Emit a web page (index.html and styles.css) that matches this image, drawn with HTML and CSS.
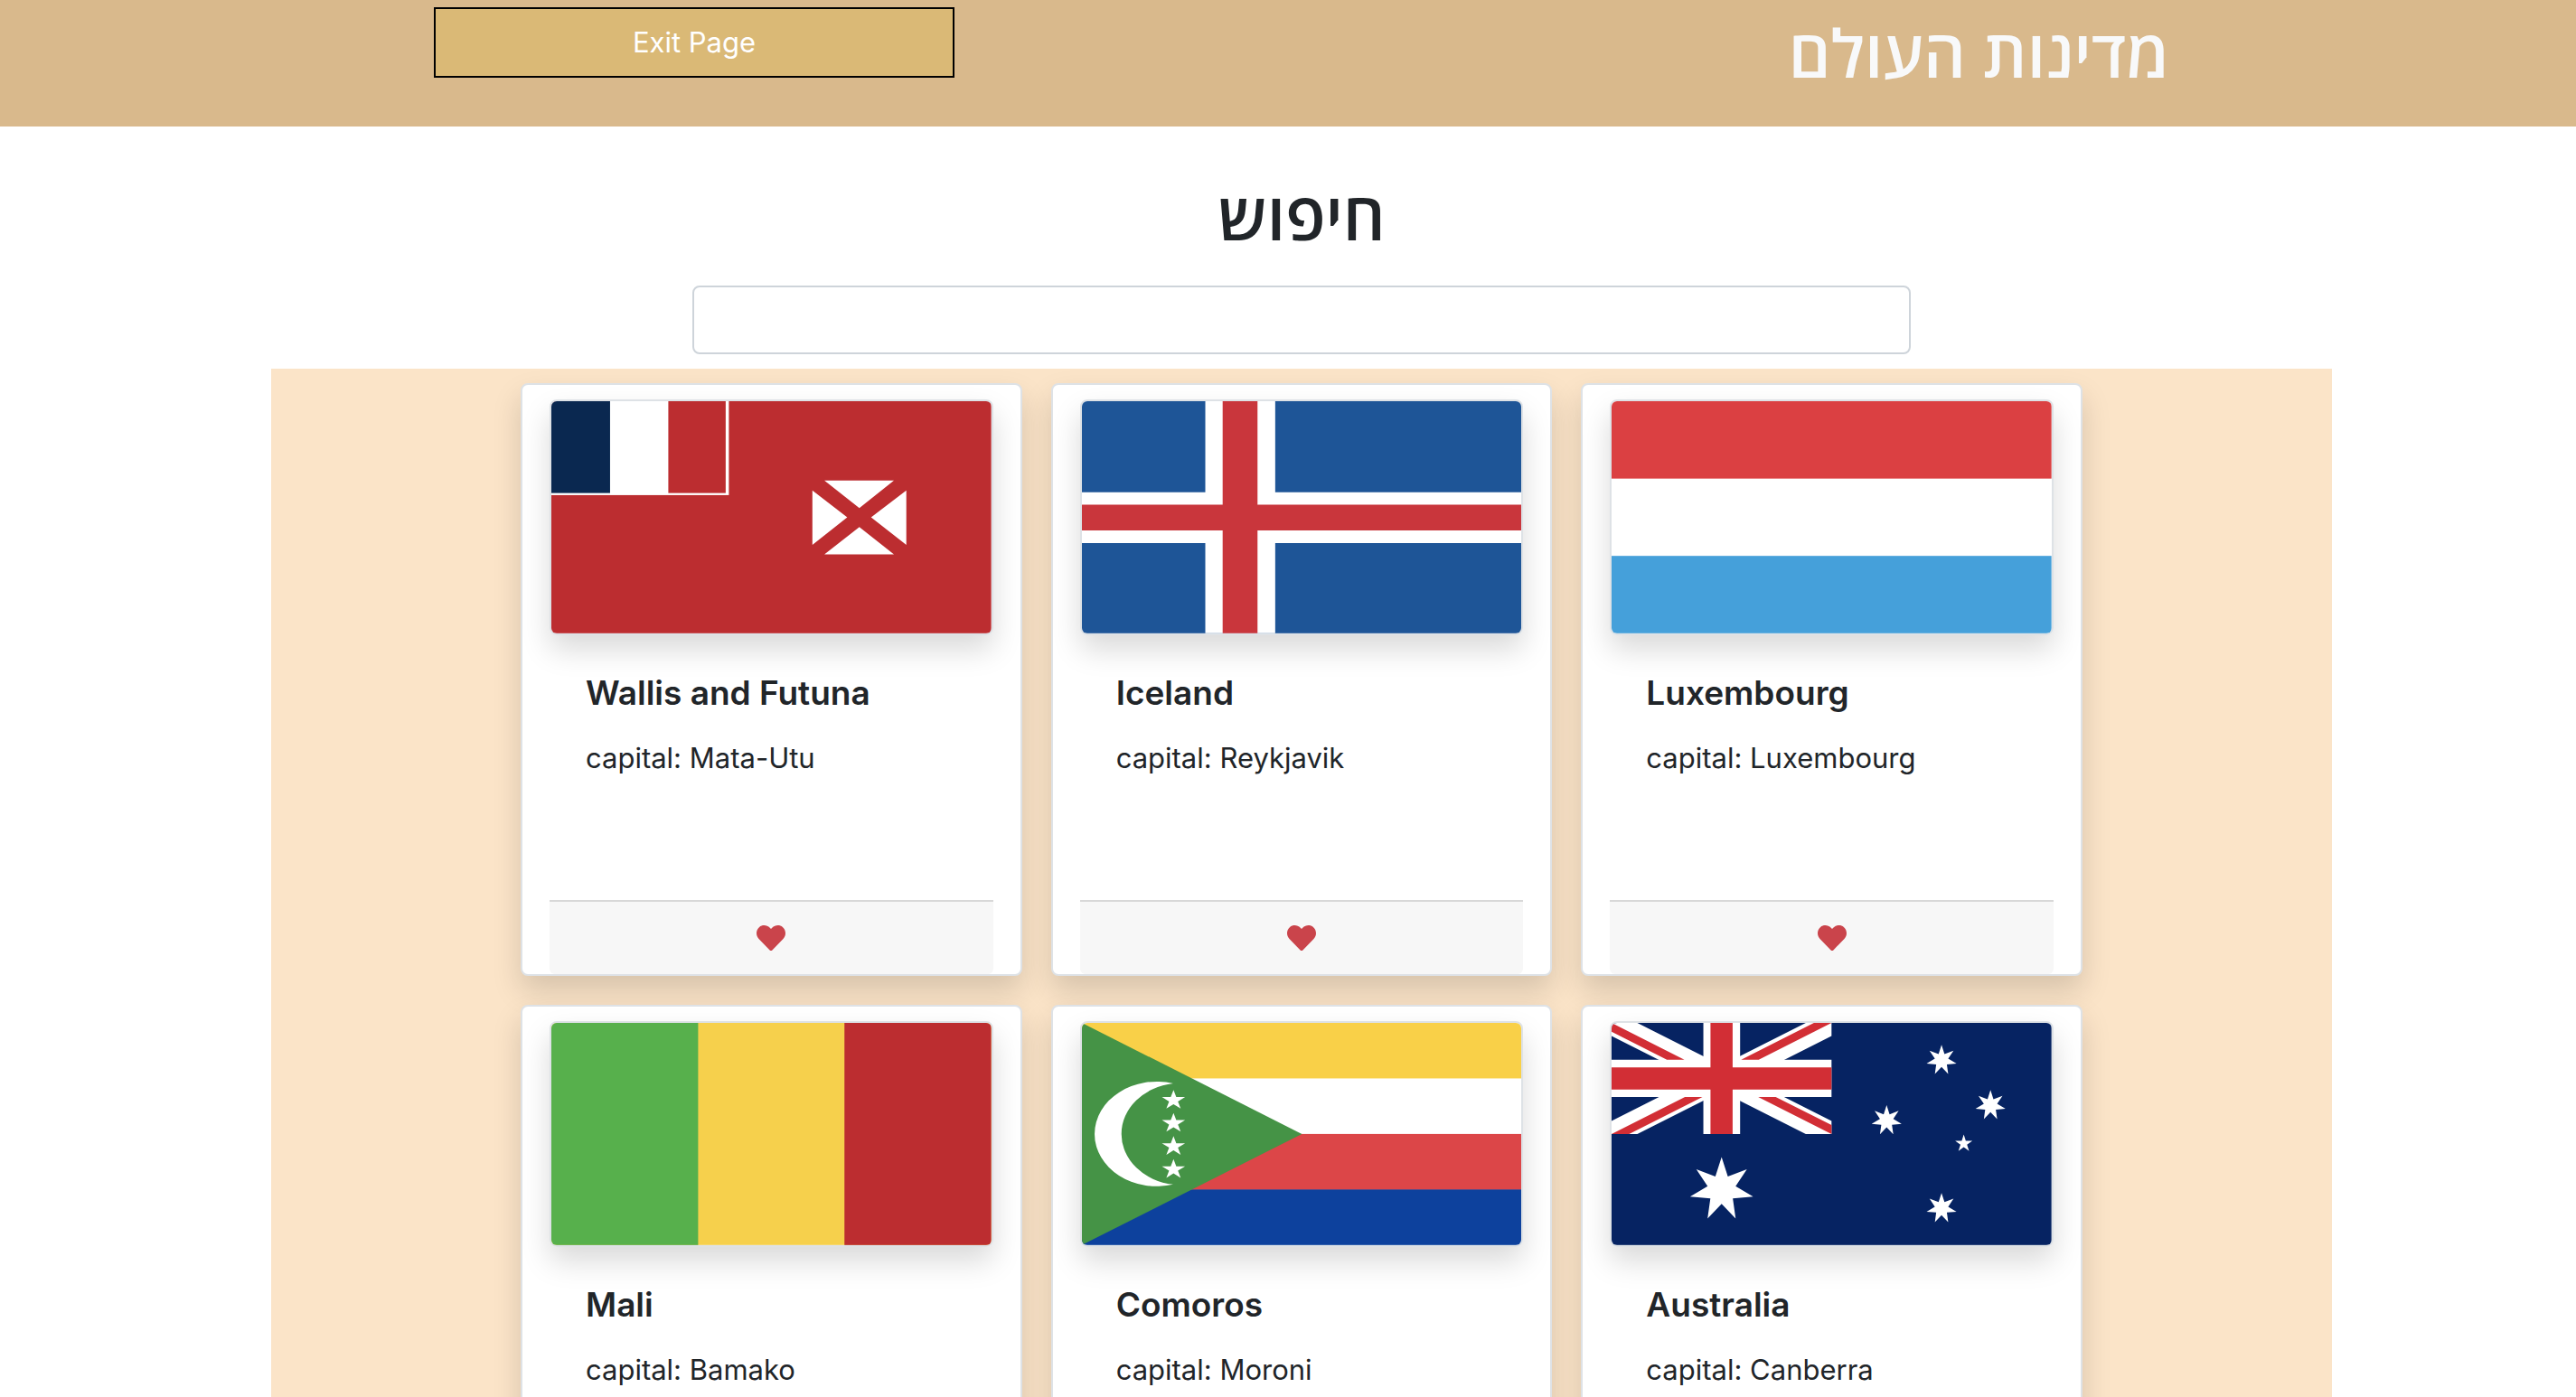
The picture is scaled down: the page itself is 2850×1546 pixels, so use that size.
FILE: index.html
```html
<!DOCTYPE html>
<html lang="en">
<head>
<meta charset="utf-8">
<meta name="viewport" content="width=device-width, initial-scale=1">
<title>מדינות העולם</title>
<link rel="stylesheet" href="styles.css">
</head>
<body>
<svg class="defs" aria-hidden="true">
  <symbol id="heart" viewBox="0 0 512 512"><path d="M462.3 62.6C407.5 15.9 326 24.3 275.7 76.2L256 96.5l-19.7-20.3C186.1 24.3 104.5 15.9 49.7 62.6c-62.8 53.6-66.1 149.8-9.9 207.9l193.5 199.8c12.5 12.9 32.8 12.9 45.3 0l193.5-199.8c56.3-58.1 53-154.3-9.8-207.9z"/></symbol>
  <polygon id="star7" points="0,-1 .193,-.4 .782,-.623 .433,-.099 .975,.223 .347,.277 .434,.901 0,.444 -.434,.901 -.347,.277 -.975,.223 -.433,-.099 -.782,-.623 -.193,-.4"/>
  <polygon id="star5" points="0,-1 .225,-.309 .951,-.309 .363,.118 .588,.809 0,.382 -.588,.809 -.363,.118 -.951,-.309 -.225,-.309"/>
</svg>

<header class="header">
  <div class="header-inner">
    <button class="exit" type="button">Exit Page</button>
    <h1 class="heading header-title" lang="he" dir="rtl">מדינות העולם</h1>
  </div>
</header>

<main class="main">
  <form class="search">
    <label class="heading" for="search" lang="he" dir="rtl">חיפוש</label>
    <input class="search-input" id="search" type="text">
  </form>

  <section class="countries">
    <div class="grid">
      <article class="card">
        <svg class="flag" viewBox="0 0 487 257" role="img" aria-label="Flag of Wallis and Futuna">
          <rect width="487" height="257" fill="#bc2d30"/>
          <rect width="196.500" height="104" fill="#fff"/>
          <rect width="65" height="101.700" fill="#0a2850"/>
          <rect x="129.500" width="63.500" height="101.700" fill="#bc2d30"/>
          <path fill="#fff" d="M302.300 87.700h77L341 118.300zM302.300 169.700h77L341 139.300zM289 98.700V159l38.600-30.300zM393 98.700V159l-39-30.300z"/>
        </svg>
        <div class="card-body">
          <h2 class="card-title">Wallis and Futuna</h2>
          <p class="card-text">capital: Mata-Utu</p>
        </div>
        <div class="card-footer"><button class="like" type="button" aria-label="Like Wallis and Futuna"><svg class="heart"><use href="#heart"/></svg></button></div>
      </article>

      <article class="card">
        <svg class="flag" viewBox="0 0 487 257" role="img" aria-label="Flag of Iceland">
          <rect width="487" height="257" fill="#1e5597"/>
          <path fill="#fff" d="M136.600 0H214v257h-77.400zM0 100.700h487V157H0z"/>
          <path fill="#c9363c" d="M155.800 0h38.600v257h-38.600zM0 114.700h487V143H0z"/>
        </svg>
        <div class="card-body">
          <h2 class="card-title">Iceland</h2>
          <p class="card-text">capital: Reykjavik</p>
        </div>
        <div class="card-footer"><button class="like" type="button" aria-label="Like Iceland"><svg class="heart"><use href="#heart"/></svg></button></div>
      </article>

      <article class="card">
        <svg class="flag" viewBox="0 0 487 257" role="img" aria-label="Flag of Luxembourg">
          <rect width="487" height="257" fill="#fff"/>
          <rect width="487" height="85.700" fill="#db4042"/>
          <rect y="171.300" width="487" height="85.700" fill="#45a0da"/>
        </svg>
        <div class="card-body">
          <h2 class="card-title">Luxembourg</h2>
          <p class="card-text">capital: Luxembourg</p>
        </div>
        <div class="card-footer"><button class="like" type="button" aria-label="Like Luxembourg"><svg class="heart"><use href="#heart"/></svg></button></div>
      </article>

      <article class="card">
        <svg class="flag" viewBox="0 0 487 246" role="img" aria-label="Flag of Mali">
          <rect width="487" height="246" fill="#f6d04c"/>
          <rect width="162.500" height="246" fill="#57b04c"/>
          <rect x="324.500" width="162.500" height="246" fill="#bc2d30"/>
        </svg>
        <div class="card-body">
          <h2 class="card-title">Mali</h2>
          <p class="card-text">capital: Bamako</p>
        </div>
        <div class="card-footer"><button class="like" type="button" aria-label="Like Mali"><svg class="heart"><use href="#heart"/></svg></button></div>
      </article>

      <article class="card">
        <svg class="flag" viewBox="0 0 487 246" role="img" aria-label="Flag of Comoros">
          <rect width="487" height="62" fill="#f9d048"/>
          <rect y="61.500" width="487" height="62" fill="#fff"/>
          <rect y="123" width="487" height="62" fill="#dc4648"/>
          <rect y="184.500" width="487" height="61.500" fill="#0d419d"/>
          <path fill="#459346" d="M0 0l243.500 123L0 246z"/>
          <path fill="#fff" d="M101 67A69 58 0 1 0 101 179A66 56.500 0 0 1 101 67z"/>
          <g fill="#fff">
            <use href="#star5" transform="translate(101.400 85.600) scale(13.500 11.400)"/>
            <use href="#star5" transform="translate(101.400 111.200) scale(13.500 11.400)"/>
            <use href="#star5" transform="translate(101.400 136.800) scale(13.500 11.400)"/>
            <use href="#star5" transform="translate(101.400 162.300) scale(13.500 11.400)"/>
          </g>
        </svg>
        <div class="card-body">
          <h2 class="card-title">Comoros</h2>
          <p class="card-text">capital: Moroni</p>
        </div>
        <div class="card-footer"><button class="like" type="button" aria-label="Like Comoros"><svg class="heart"><use href="#heart"/></svg></button></div>
      </article>

      <article class="card">
        <svg class="flag" viewBox="0 0 487 246" role="img" aria-label="Flag of Australia">
          <rect width="487" height="246" fill="#062362"/>
          <path fill="#fff" d="M0 0h28.500L243.500 108.600V123H215L0 14.400zM243.500 0V14.400L28.500 123H0V108.600L215 0z"/>
          <path fill="#fff" d="M101.600 0h40.700v123h-40.700zM0 40.700h243.500V82H0z"/>
          <path fill="#d22e35" d="M109.500 0H134v123h-24.500zM0 49.300h243.500v24.400H0z"/>
          <path fill="#d22e35" d="M0 0L80.600 40.700H61.200L0 9.800zM243.500 0L162.900 40.700H143.500L224 0zM243.500 123L162.300 82H181.700L243.500 113.200zM0 123L81.200 82H100.600L19.400 123z"/>
          <g fill="#fff">
            <use href="#star7" transform="translate(121.800 184.500) scale(35.800)"/>
            <use href="#star7" transform="translate(365.300 41.300) scale(17)"/>
            <use href="#star7" transform="translate(419.500 91.300) scale(17)"/>
            <use href="#star7" transform="translate(304.500 108) scale(17)"/>
            <use href="#star7" transform="translate(365.300 205.300) scale(17)"/>
            <use href="#star5" transform="translate(389.900 133.700) scale(10)"/>
          </g>
        </svg>
        <div class="card-body">
          <h2 class="card-title">Australia</h2>
          <p class="card-text">capital: Canberra</p>
        </div>
        <div class="card-footer"><button class="like" type="button" aria-label="Like Australia"><svg class="heart"><use href="#heart"/></svg></button></div>
      </article>
    </div>
  </section>
</main>
</body>
</html>
```
FILE: styles.css
```css
*,
*::before,
*::after {
  box-sizing: border-box;
}

body {
  margin: 0;
  background: #fff;
  color: #212529;
  font-family: Inter, "Liberation Sans", sans-serif;
  font-size: 31px;
  line-height: 48px;
}

.defs {
  position: absolute;
  width: 0;
  height: 0;
}

.heading {
  margin: 0;
  font-family: "Open Sans", "DejaVu Sans", sans-serif;
  font-size: 73px;
  font-weight: 600;
  line-height: 100px;
}

.header {
  padding: 8px 0 32px 30px;
  background: #d9b98c;
}

.header-inner {
  display: flex;
  align-items: flex-start;
  justify-content: space-between;
  width: 100%;
  max-width: 1920px;
  margin: 0 auto;
}

.header-title {
  color: #f8f9fa;
}

.exit {
  width: 30%;
  padding: 13px 12px;
  border: 2px solid #000;
  background: #dab976;
  color: #fff;
  font: inherit;
}

.main {
  padding-left: 30px;
}

.search {
  display: flex;
  flex-direction: column;
  align-items: center;
  gap: 28px;
  padding: 48px 0 16px;
}

.search-input {
  width: 60%;
  max-width: 1348px;
  height: 76px;
  padding: 12px 24px;
  border: 2px solid #ced4da;
  border-radius: 8px;
  background: #fff;
  color: #495057;
  font: inherit;
}

.countries {
  max-width: 2280px;
  margin: 0 auto;
  padding: 16px 30px;
  background: #fbe4c8;
}

.grid {
  display: grid;
  grid-template-columns: repeat(3, 1fr);
  gap: 32px;
  max-width: 1728px;
  margin: 0 auto;
}

.card {
  display: flex;
  flex-direction: column;
  min-height: 656px;
  padding: 16px 30px 0;
  border: 2px solid #dee2e6;
  border-radius: 8px;
  background: #fff;
  box-shadow: 0 16px 32px rgba(0, 0, 0, 0.15);
}

.flag {
  display: block;
  width: 100%;
  height: auto;
  border: 2px solid #dee2e6;
  border-radius: 8px;
  box-shadow: 0 16px 32px rgba(0, 0, 0, 0.15);
}

.card-body {
  flex: 1;
  padding: 40px;
}

.card-title {
  margin: 0 0 24px;
  font-size: 37px;
  font-weight: 600;
  line-height: 48px;
}

.card-text {
  margin: 0;
}

.card-footer {
  display: flex;
  justify-content: center;
  padding: 24px 40px;
  border-top: 2px solid #d8d8d8;
  border-radius: 0 0 6px 6px;
  background: #f7f7f7;
}

.like {
  display: block;
  padding: 0;
  border: 0;
  background: none;
  color: #ca444b;
}

.heart {
  display: block;
  width: 32px;
  height: 32px;
  fill: currentColor;
}
```
